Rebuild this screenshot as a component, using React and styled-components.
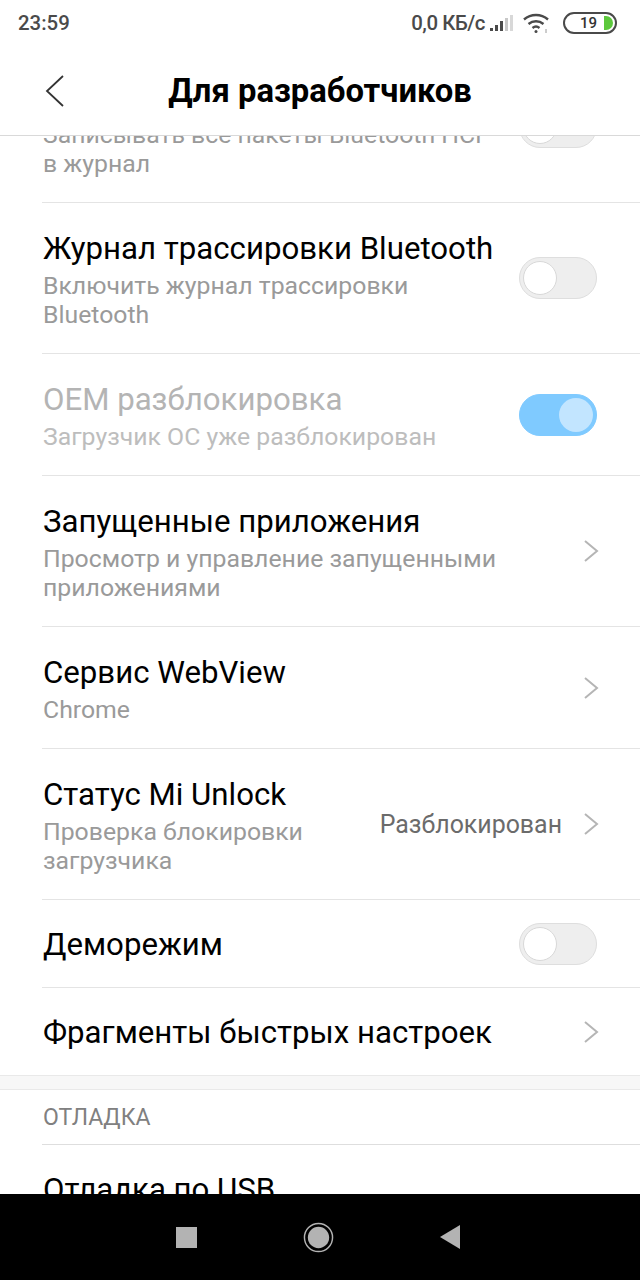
import React from 'react'
import styled, { createGlobalStyle } from 'styled-components'

const GlobalStyle = createGlobalStyle`
  html, body {
    margin: 0;
    padding: 0;
    background: #fff;
  }
  * {
    box-sizing: border-box;
  }
`

const Screen = styled.div`
  width: 640px;
  height: 1280px;
  display: flex;
  flex-direction: column;
  overflow: hidden;
  background: #fff;
  font-family: Roboto, "Noto Sans", sans-serif;
`

const StatusBar = styled.div`
  height: 48px;
  flex: none;
  display: flex;
  align-items: center;
  padding: 0 23px 2px 18px;
  color: #4a4a4a;
  font-size: 20.4px;
  font-weight: 500;
`

const StatusRight = styled.div`
  margin-left: auto;
  display: flex;
  align-items: center;
`

const Speed = styled.span`
  margin-right: 4px;
  letter-spacing: -0.45px;
`

const WifiIcon = styled.svg`
  margin-left: 8px;
`

const Battery = styled.div`
  width: 54px;
  height: 22px;
  margin-left: 12px;
  padding: 0 2px 0 0;
  display: flex;
  align-items: center;
  justify-content: flex-end;
  border: 2px solid #4a4a4a;
  border-radius: 11px;
  font-size: 15px;
  color: #333;
`

const BatteryLevel = styled.span`
  width: 9px;
  height: 14px;
  margin-left: 7px;
  background: #5cc83c;
  border-radius: 0 7px 7px 0;
`

const Header = styled.header`
  height: 88px;
  flex: none;
  position: relative;
  display: flex;
  align-items: center;
  justify-content: center;
  border-bottom: 1px solid #d9d9d9;
  padding-bottom: 2px;
`

const BackIcon = styled.svg`
  position: absolute;
  left: 44px;
  top: 26px;
`

const Title = styled.h1`
  margin: 0;
  font-size: 32.8px;
  font-weight: 700;
  color: #000;
`

const Content = styled.main`
  flex: 1;
  min-height: 0;
  overflow: hidden;
`

const ClippedStart = styled.div`
  margin-top: -84px;
`

const Row = styled.div`
  min-height: ${p => p.$height}px;
  margin-left: 42px;
  padding-right: 43px;
  display: flex;
  align-items: center;
  border-bottom: ${p => (p.$last ? 'none' : '1px solid #e4e4e4')};
`

const RowText = styled.div`
  flex: 1;
  min-width: 0;
  padding: 2px 0 0 1px;
`

const RowTitle = styled.div`
  font-size: 31.2px;
  line-height: 40px;
  color: ${p => (p.$disabled ? '#b4b4b4' : '#000')};
`

const RowSub = styled.div`
  margin-top: 2px;
  max-width: ${p => p.$width || 470}px;
  font-size: 24.8px;
  line-height: 29.5px;
  color: ${p => (p.$disabled ? '#bdbdbd' : '#9a9a9a')};
`

const RowValue = styled.span`
  margin-right: 21px;
  font-size: 24.9px;
  color: #6b6b6b;
  white-space: nowrap;
`

const Track = styled.div`
  width: 78px;
  height: 42px;
  flex: none;
  padding: 3px;
  display: flex;
  justify-content: ${p => (p.$on ? 'flex-end' : 'flex-start')};
  border-radius: 21px;
  background: ${p => (p.$on ? '#7fcaff' : '#eeeeee')};
  border: 1px solid ${p => (p.$on ? '#7fcaff' : '#dedede')};
`

const Knob = styled.span`
  width: 34px;
  height: 34px;
  border-radius: 50%;
  background: ${p => (p.$on ? '#c2e5ff' : '#fff')};
  border: ${p => (p.$on ? 'none' : '1px solid #d8d8d8')};
`

const Chevron = styled.svg`
  flex: none;
  margin-right: -2px;
`

const GroupEnd = styled.div`
  height: 15px;
  background: #f7f7f7;
  border-top: 1px solid #e9e9e9;
  border-bottom: 1px solid #e9e9e9;
`

const SectionLabel = styled.div`
  height: 55px;
  margin-left: 42px;
  padding-left: 1px;
  display: flex;
  align-items: center;
  border-bottom: 1px solid #dedede;
  font-size: 23px;
  color: #808080;
`

const NavBar = styled.nav`
  height: 86px;
  flex: none;
  display: flex;
  align-items: center;
  justify-content: center;
  gap: 106px;
  padding: 0 4px 0 0;
  background: #000;
`

const Toggle = ({ on }) => (
  <Track $on={on}>
    <Knob $on={on} />
  </Track>
)

const Arrow = () => (
  <Chevron width="16" height="24" viewBox="0 0 16 24" fill="none" stroke="#b5b5b5" strokeWidth="2">
    <path d="M2 2l12 10L2 22" />
  </Chevron>
)

function App() {
  return (
    <Screen>
      <GlobalStyle />
      <StatusBar>
        23:59
        <StatusRight>
          <Speed>0,0 КБ/с</Speed>
          <svg width="26" height="20" viewBox="0 0 26 20">
            <rect x="1" y="15" width="3" height="3" fill="#4a4a4a" />
            <rect x="6" y="12" width="3" height="6" fill="#4a4a4a" />
            <rect x="11" y="8" width="3" height="10" fill="#4a4a4a" />
            <rect x="16" y="5" width="3" height="13" fill="#c8c8c8" />
            <rect x="21" y="2" width="3" height="16" fill="#d8d8d8" />
          </svg>
          <WifiIcon width="28" height="22" viewBox="0 0 28 22" fill="none" stroke="#4a4a4a" strokeWidth="2.4">
            <path d="M1 7.500C8 1.500 18 1.500 25 7.500" />
            <path d="M5.500 12c4.500-3.600 10.500-3.600 15 0" />
            <path d="M9.500 16c2-1.600 5-1.600 7 0" />
            <circle cx="13" cy="19.500" r="1.500" fill="#4a4a4a" stroke="none" />
            <path d="M23 17v4" stroke="#9a9a9a" strokeWidth="1" />
          </WifiIcon>
          <Battery>
            19
            <BatteryLevel />
          </Battery>
        </StatusRight>
      </StatusBar>
      <Header>
        <BackIcon width="20" height="34" viewBox="0 0 20 34" fill="none" stroke="#333" strokeWidth="1.8">
          <path d="M19 2L3 17l16 15" />
        </BackIcon>
        <Title>Для разработчиков</Title>
      </Header>
      <Content>
        <ClippedStart>
          <Row $height={151}>
            <RowText>
              <RowTitle>&nbsp;</RowTitle>
              <RowSub $width={450}>Записывать все пакеты Bluetooth HCI в журнал</RowSub>
            </RowText>
            <Toggle />
          </Row>
          <Row $height={151}>
            <RowText>
              <RowTitle>Журнал трассировки Bluetooth</RowTitle>
              <RowSub $width={420}>Включить журнал трассировки Bluetooth</RowSub>
            </RowText>
            <Toggle />
          </Row>
          <Row $height={122}>
            <RowText>
              <RowTitle $disabled>OEM разблокировка</RowTitle>
              <RowSub $disabled>Загрузчик ОС уже разблокирован</RowSub>
            </RowText>
            <Toggle on />
          </Row>
          <Row $height={151}>
            <RowText>
              <RowTitle>Запущенные приложения</RowTitle>
              <RowSub>Просмотр и управление запущенными приложениями</RowSub>
            </RowText>
            <Arrow />
          </Row>
          <Row $height={122}>
            <RowText>
              <RowTitle>Сервис WebView</RowTitle>
              <RowSub>Chrome</RowSub>
            </RowText>
            <Arrow />
          </Row>
          <Row $height={151}>
            <RowText>
              <RowTitle>Статус Mi Unlock</RowTitle>
              <RowSub $width={280}>Проверка блокировки загрузчика</RowSub>
            </RowText>
            <RowValue>Разблокирован</RowValue>
            <Arrow />
          </Row>
          <Row $height={88}>
            <RowText>
              <RowTitle>Деморежим</RowTitle>
            </RowText>
            <Toggle />
          </Row>
          <Row $height={87} $last>
            <RowText>
              <RowTitle>Фрагменты быстрых настроек</RowTitle>
            </RowText>
            <Arrow />
          </Row>
          <GroupEnd />
          <SectionLabel>ОТЛАДКА</SectionLabel>
          <Row $height={88} $last>
            <RowText>
              <RowTitle>Отладка по USB</RowTitle>
            </RowText>
          </Row>
        </ClippedStart>
      </Content>
      <NavBar>
        <svg width="21" height="21" viewBox="0 0 21 21">
          <rect x="0" y="0" width="21" height="21" fill="#b3b3b3" />
        </svg>
        <svg width="31" height="31" viewBox="0 0 32 32">
          <circle cx="16" cy="16" r="14.500" fill="none" stroke="#b3b3b3" strokeWidth="1.500" />
          <circle cx="16" cy="16" r="11" fill="#b3b3b3" />
        </svg>
        <svg width="20" height="24" viewBox="0 0 20 24">
          <path d="M20 0v24L0 12z" fill="#b3b3b3" />
        </svg>
      </NavBar>
    </Screen>
  )
}

export default App
